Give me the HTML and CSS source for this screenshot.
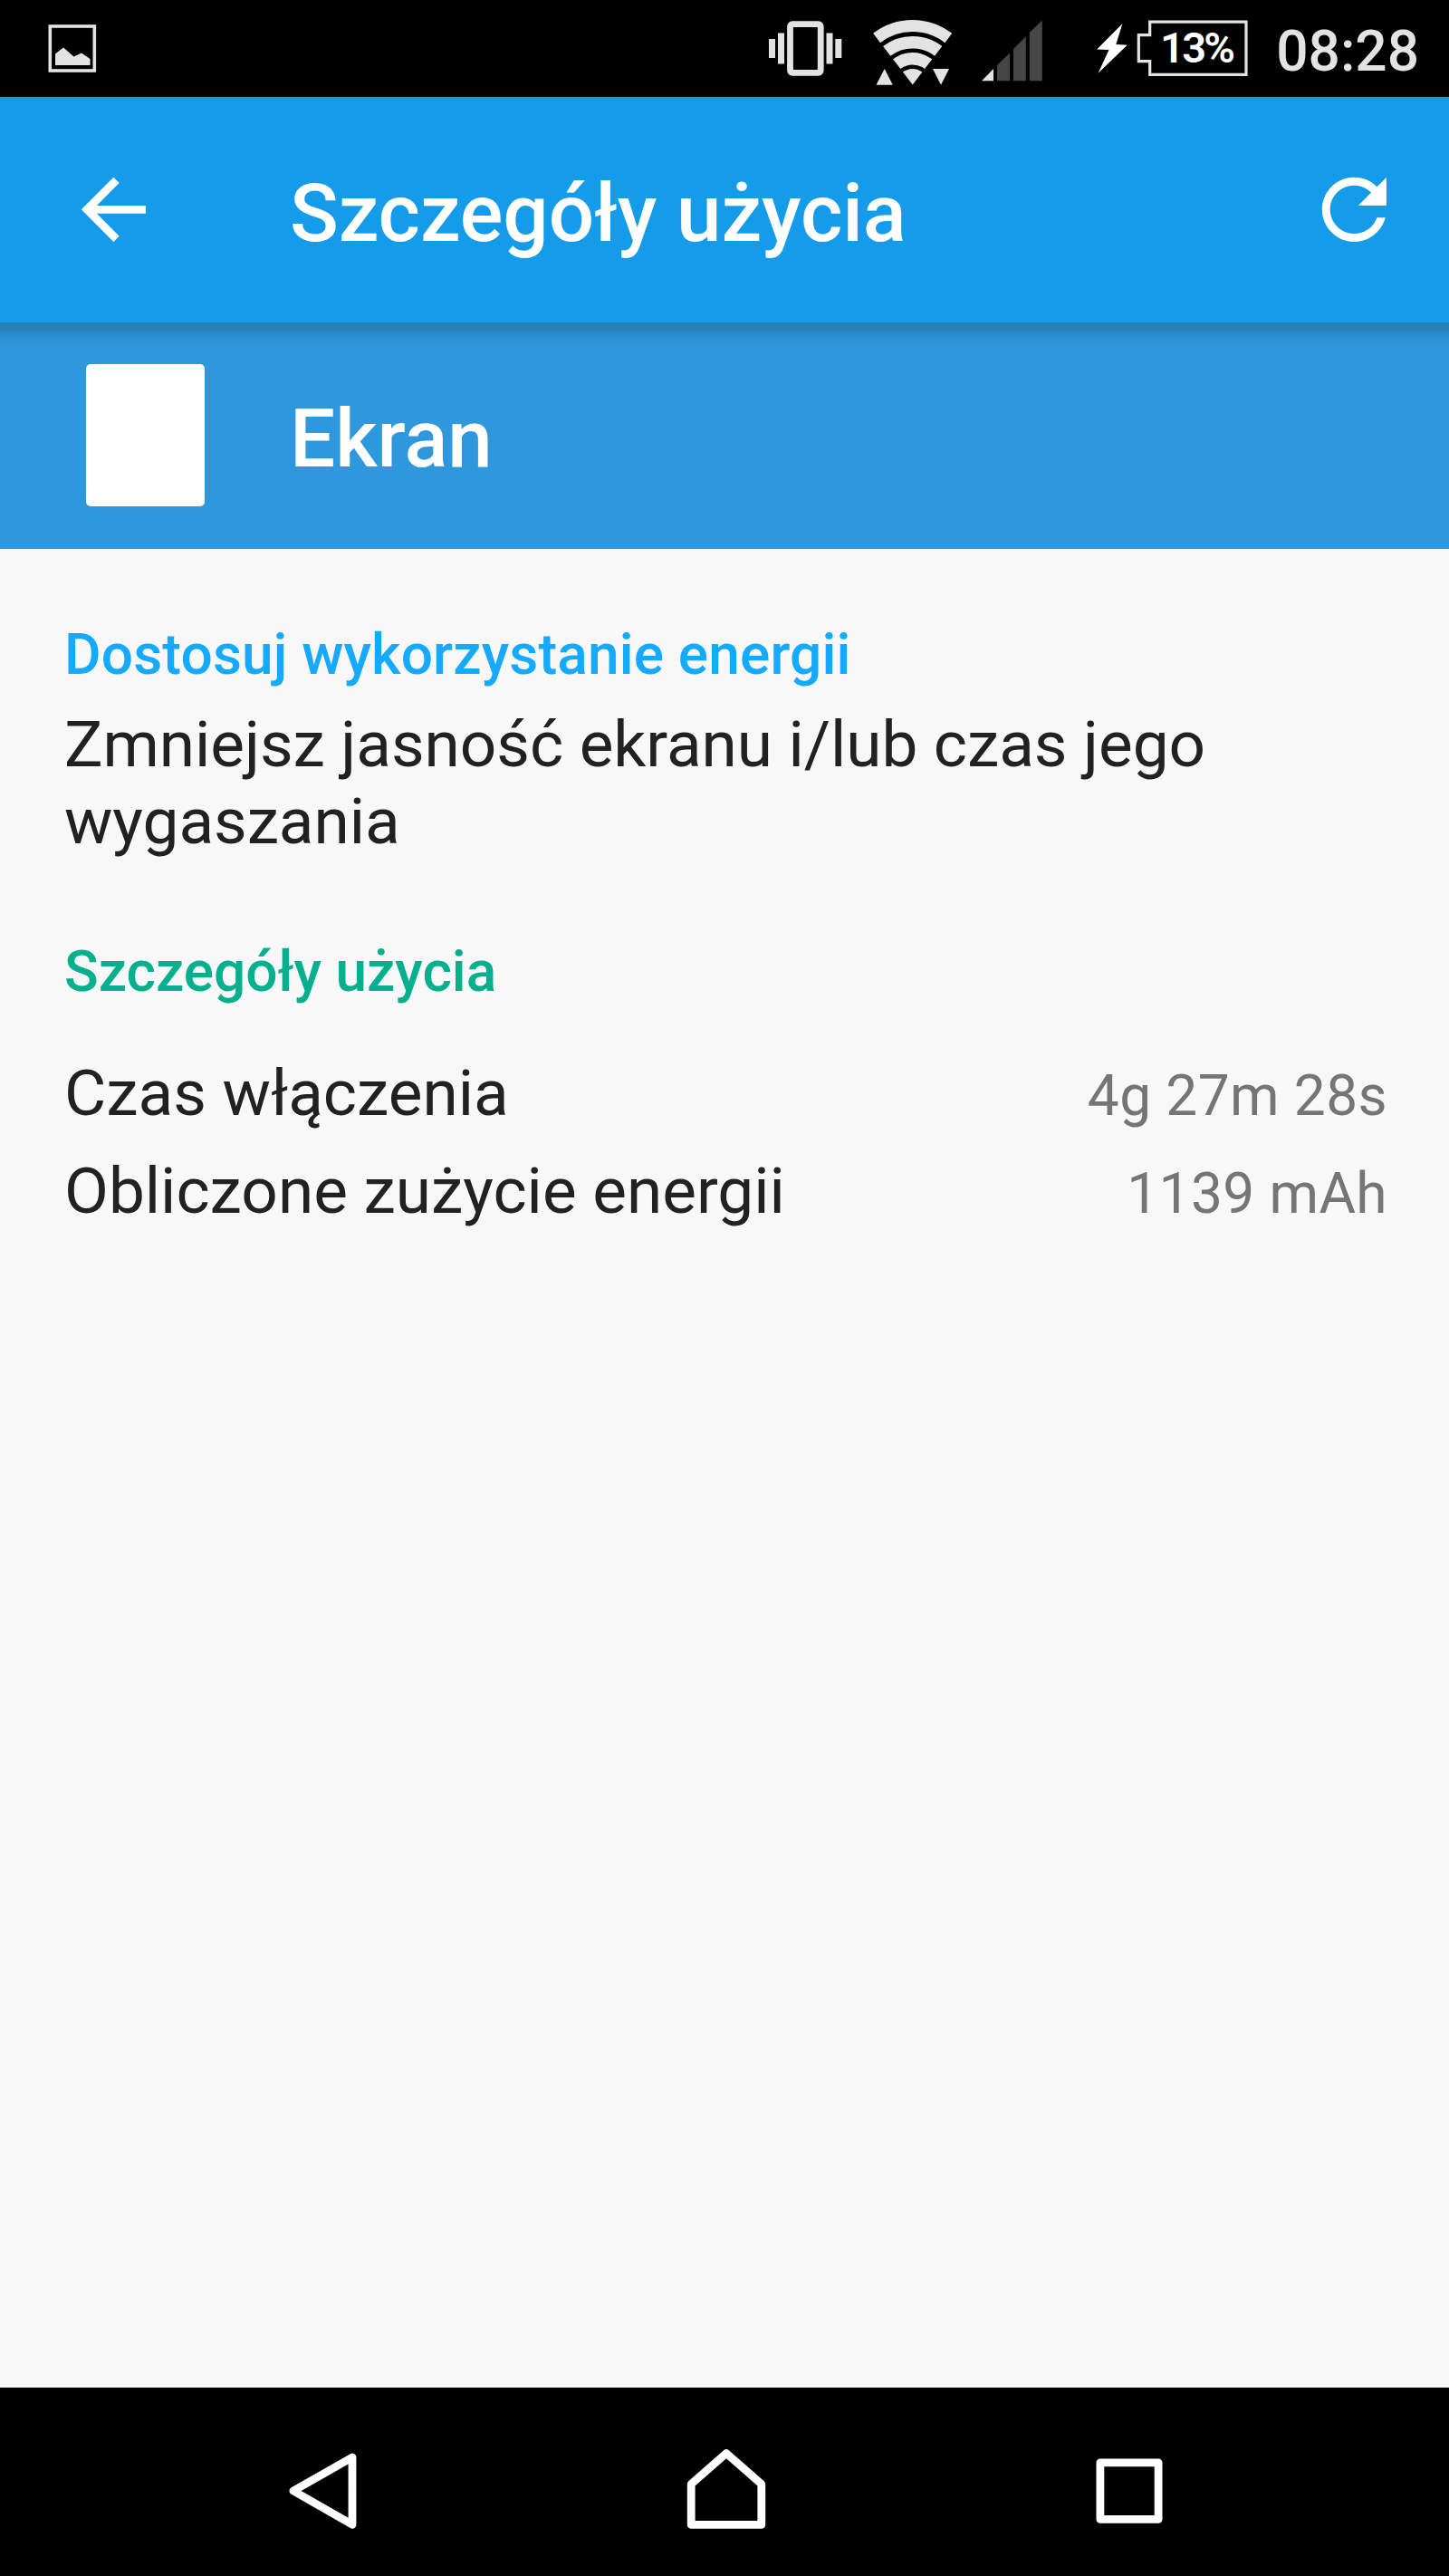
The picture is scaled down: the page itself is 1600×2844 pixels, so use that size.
FILE: index.html
```html
<!DOCTYPE html>
<html lang="pl">
<head>
  <meta charset="UTF-8">
  <meta name="viewport" content="width=device-width, initial-scale=1.0">
  <title>Szczegóły użycia</title>
  <link rel="stylesheet" href="styles.css">
</head>
<body>
  <!-- Status bar -->
  <div class="status-bar">
    <svg class="icon-picture" width="54" height="107" viewBox="53 0 54 107">
      <rect x="55.3" y="29" width="49" height="49" fill="none" stroke="#e3e3e3" stroke-width="3.6"/>
      <path d="M61 59.5L70 52.5L81.5 62.5L90 58.5L99.5 65V72H61Z" fill="#e3e3e3"/>
    </svg>
    <div class="status-right">
      <svg width="81" height="107" viewBox="849 0 81 107" fill="#e3e3e3">
        <rect x="872.5" y="26.7" width="33.7" height="53.6" rx="2.5" fill="none" stroke="#e3e3e3" stroke-width="6.8"/>
        <rect x="849" y="43" width="7" height="21"/>
        <rect x="859" y="36.5" width="7" height="34"/>
        <rect x="912.5" y="36.5" width="7" height="34"/>
        <rect x="922.3" y="43" width="7" height="21"/>
      </svg>
      <svg class="icon-wifi" width="88" height="107" viewBox="964 0 88 107" fill="#e3e3e3">
        <g fill="none" stroke="#e3e3e3">
          <path d="M968.1 42A65 65 0 0 1 1047.3 42" stroke-width="13"/>
          <path d="M979.2 56.4A46.75 46.75 0 0 1 1036.2 56.4" stroke-width="13.5"/>
          <path d="M990.2 70.7A28.75 28.75 0 0 1 1025.2 70.7" stroke-width="13.5"/>
        </g>
        <path d="M1007.7 93.5L997 79.6A17.5 17.5 0 0 1 1018.4 79.6Z"/>
        <path d="M967.5 93.8L976.7 76L985.8 93.8Z"/>
        <path d="M1030 76H1048L1039 93.8Z"/>
      </svg>
      <svg class="icon-signal" width="68" height="107" viewBox="1084 0 68 107" fill="#464646">
        <path d="M1084 89.3L1097 76V89.3Z" fill="#e3e3e3"/>
        <path d="M1101 89.3V72L1115 58.5V89.3Z"/>
        <path d="M1119 89.3V54L1132.8 40.3V89.3Z"/>
        <path d="M1136.8 89.3V36L1150.7 22.5V89.3Z"/>
      </svg>
      <svg class="icon-battery" width="168" height="107" viewBox="1211 0 168 107">
        <path d="M1239.5 26L1211.2 54.6L1224.5 55L1212.6 80.8L1244.8 49.8L1232.3 49Z" fill="#fff"/>
        <path d="M1269.7 24.2H1376V82.3H1269.7V67.7H1257.3V38.7H1269.7Z" fill="none" stroke="#e3e3e3" stroke-width="3.2"/>
        <text class="battery-text" x="1281" y="69" textLength="83">13%</text>
      </svg>
      <span class="clock">08:28</span>
    </div>
  </div>

  <!-- App bar -->
  <header class="app-bar">
    <svg class="icon" viewBox="0 0 24 24"><path d="M20 11H7.83l5.59-5.59L12 4l-8 8 8 8 1.41-1.41L7.83 13H20v-2z"/></svg>
    <h1>Szczegóły użycia</h1>
    <svg class="icon" viewBox="0 0 24 24"><path d="M17.65 6.35C16.2 4.9 14.21 4 12 4c-4.42 0-7.99 3.58-7.99 8s3.57 8 7.99 8c3.73 0 6.84-2.55 7.73-6h-2.08c-.82 2.33-3.04 4-5.65 4-3.31 0-6-2.69-6-6s2.69-6 6-6c1.66 0 3.14.69 4.22 1.78L13 11h7V4l-2.35 2.35z"/></svg>
  </header>

  <div class="item-header">
    <div class="item-icon"></div>
    <h2>Ekran</h2>
  </div>

  <!-- Details -->
  <main class="content">
    <h3 class="tips">Dostosuj wykorzystanie energii</h3>
    <p>Zmniejsz jasność ekranu i/lub czas jego wygaszania</p>
    <h3 class="details">Szczegóły użycia</h3>
    <div class="row">
      <span>Czas włączenia</span>
      <span class="value">4g 27m 28s</span>
    </div>
    <div class="row">
      <span>Obliczone zużycie energii</span>
      <span class="value">1139 mAh</span>
    </div>
  </main>

  <!-- Navigation bar -->
  <nav class="nav-bar">
    <svg width="76" height="90" viewBox="318 2703 76 90"><path d="M323.9 2750L389 2713V2787.3Z"/></svg>
    <svg width="88" height="90" viewBox="757.5 2703 88 90"><path d="M801.5 2708.5L840.3 2742.5V2787.4H762.7V2742.5Z"/></svg>
    <svg width="74" height="90" viewBox="1210.5 2703 74 90"><rect x="1215.4" y="2718.8" width="64.2" height="62.6"/></svg>
  </nav>
</body>
</html>
```
FILE: styles.css
```css
* { box-sizing: border-box; }
body {
  margin: 0;
  height: 2844px;
  display: flex;
  flex-direction: column;
  background: #f8f8f8;
  color: #212121;
  font-family: Roboto, sans-serif;
}
svg {
  display: block;
  flex: none;
}
h1, h2, h3, p {
  margin: 0;
}

/* Status bar */
.status-bar {
  display: flex;
  justify-content: space-between;
  height: 107px;
  padding: 0 33px 0 53px;
  background: #000;
}
.status-right {
  display: flex;
}
.icon-wifi {
  margin-left: 34px;
}
.icon-signal {
  margin-left: 32px;
}
.icon-battery {
  margin-left: 59px;
}
.battery-text {
  fill: #fff;
  font-size: 47px;
  font-weight: 600;
}
.clock {
  margin-left: 30.5px;
  color: #e3e3e3;
  font-size: 62.2px;
  font-weight: 500;
  line-height: 113px;
}

/* App bar */
.app-bar {
  display: flex;
  align-items: center;
  height: 249px;
  padding: 0 51px 0 72px;
  background: #149bea;
}
.icon {
  width: 106.7px;
  height: 106.7px;
  fill: #fff;
}
h1, h2 {
  color: #fff;
  font-size: 88.9px;
  font-weight: 500;
  line-height: 104px;
}
h1 {
  flex: 1;
  margin-left: 141.3px;
  padding-top: 9px;
  letter-spacing: -0.1px;
}

.item-header {
  display: flex;
  align-items: center;
  height: 249.5px;
  padding-left: 95px;
  background: linear-gradient(#267fb8 0, #267fb8 7px, #2a88c6 10px, #2c91d1 17px, #2f98dc 28px);
}
.item-icon {
  width: 131px;
  height: 157px;
  border-radius: 5px;
  background: #fff;
}
h2 {
  margin-left: 94px;
  padding-top: 8px;
}

/* Details */
.content {
  flex: 1;
  padding: 81.5px 68px 0 71px;
  font-size: 71.1px;
  line-height: 85px;
}
.content p {
  letter-spacing: -0.05px;
}
h3 {
  font-size: 62.2px;
  font-weight: 500;
  line-height: 72px;
}
.tips {
  color: #15aaff;
  letter-spacing: 0.15px;
  margin-bottom: 20px;
}
.details {
  color: #06b08f;
  margin: 88px 0 45px;
}
.row {
  display: flex;
  justify-content: space-between;
  align-items: baseline;
  line-height: 105px;
}
.value {
  color: #757575;
  font-size: 62.2px;
  letter-spacing: 0.4px;
}

/* Navigation bar */
.nav-bar {
  display: flex;
  justify-content: space-between;
  height: 208px;
  padding: 67px 316px 0 318px;
  background: #000;
}
.nav-bar svg {
  fill: none;
  stroke: #fff;
  stroke-width: 8.8px;
  stroke-linejoin: round;
}
```
